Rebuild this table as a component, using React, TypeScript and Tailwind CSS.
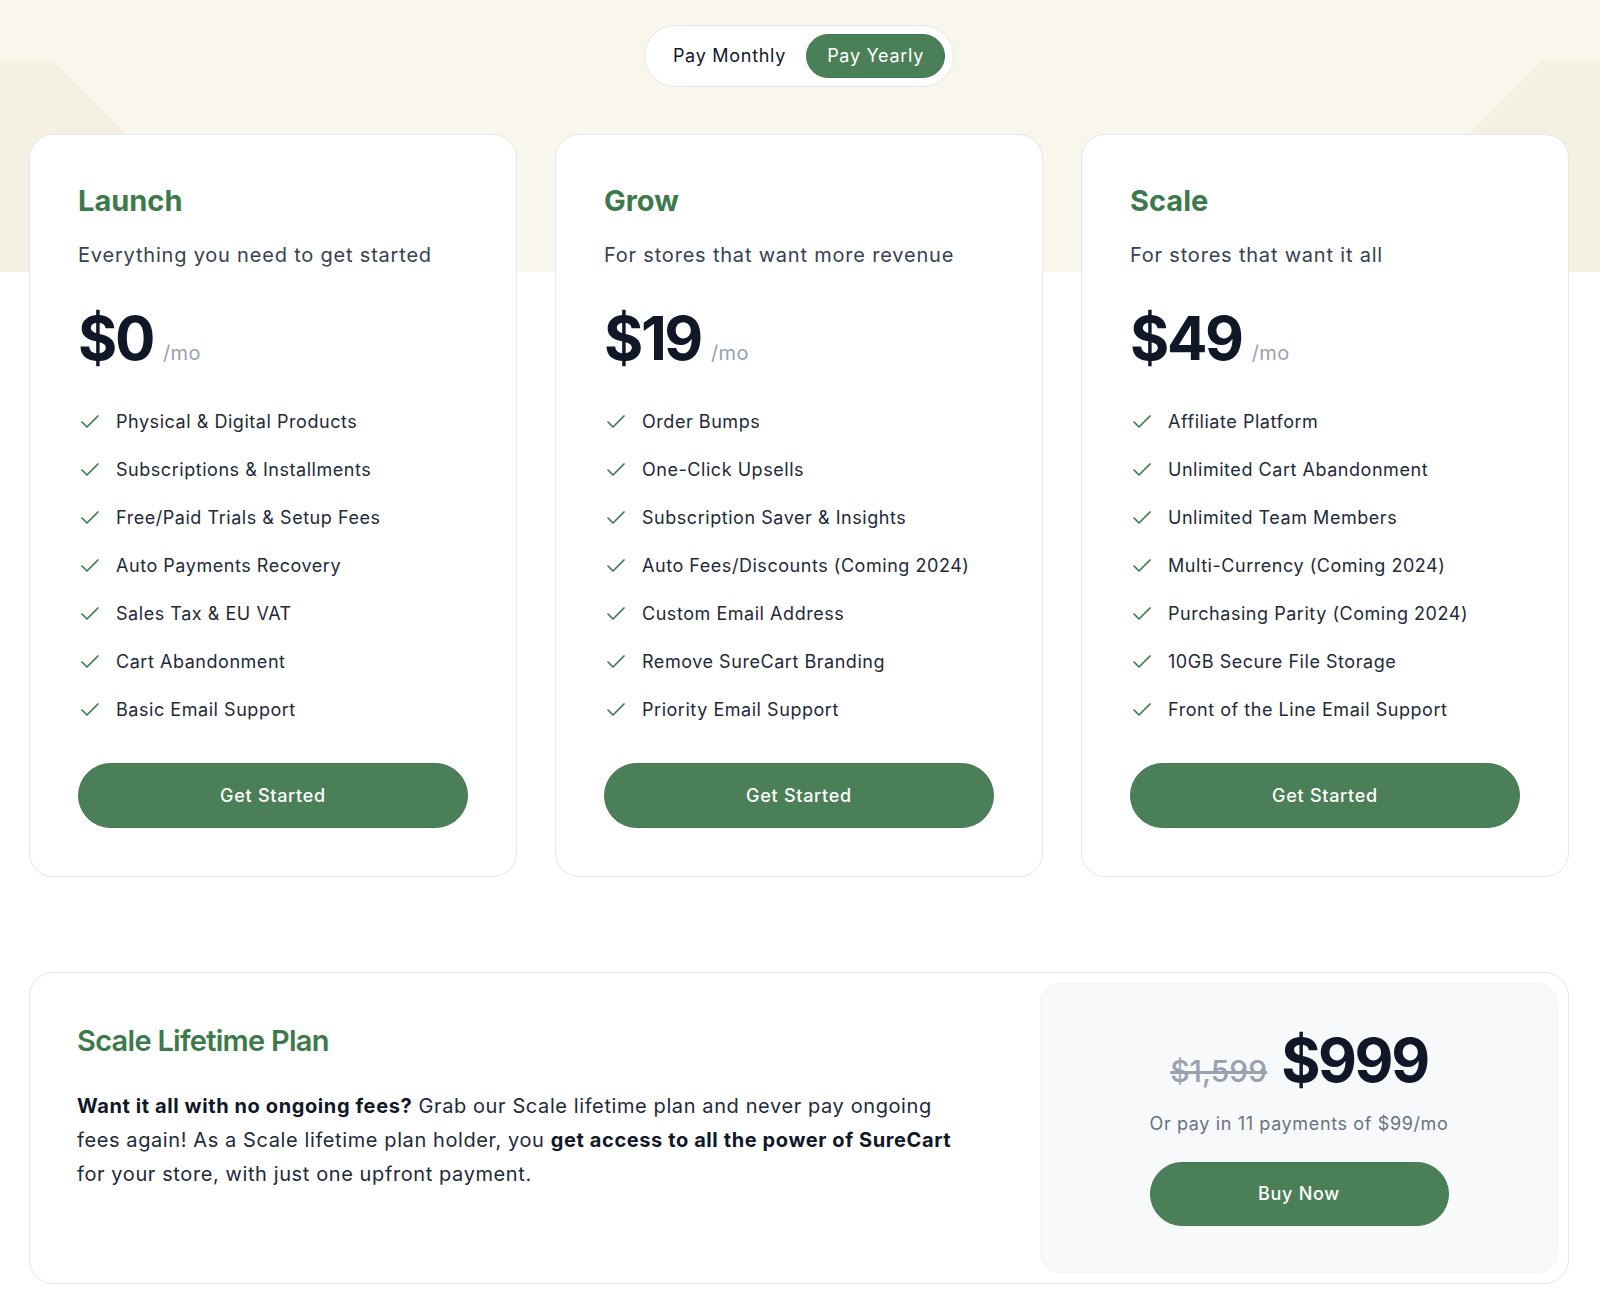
import { Check } from "lucide-react";

const plans = [
  {
    name: "Launch",
    tagline: "Everything you need to get started",
    price: "$0",
    features: [
      "Physical & Digital Products",
      "Subscriptions & Installments",
      "Free/Paid Trials & Setup Fees",
      "Auto Payments Recovery",
      "Sales Tax & EU VAT",
      "Cart Abandonment",
      "Basic Email Support",
    ],
  },
  {
    name: "Grow",
    tagline: "For stores that want more revenue",
    price: "$19",
    features: [
      "Order Bumps",
      "One-Click Upsells",
      "Subscription Saver & Insights",
      "Auto Fees/Discounts (Coming 2024)",
      "Custom Email Address",
      "Remove SureCart Branding",
      "Priority Email Support",
    ],
  },
  {
    name: "Scale",
    tagline: "For stores that want it all",
    price: "$49",
    features: [
      "Affiliate Platform",
      "Unlimited Cart Abandonment",
      "Unlimited Team Members",
      "Multi-Currency (Coming 2024)",
      "Purchasing Parity (Coming 2024)",
      "10GB Secure File Storage",
      "Front of the Line Email Support",
    ],
  },
];

export default function App() {
  return (
    <div className="relative w-full min-h-[1313px] bg-white font-['Inter',sans-serif] text-gray-900">
      {/* beige band behind the top of the cards */}
      <div className="absolute inset-x-0 top-0 h-[272px] bg-[#f9f7ec] overflow-hidden">
        <svg className="absolute inset-0 w-full h-full" viewBox="0 0 1600 272" preserveAspectRatio="none">
          <polygon points="0,61 53,61 264,272 0,272" fill="#f4f1e3" />
          <polygon points="1542,61 1600,61 1600,272 1331,272" fill="#f4f1e3" />
        </svg>
      </div>

      <div className="relative w-[1540px] ml-[29px] pt-[25px] pb-[29px]">
        {/* Billing toggle */}
        <div className="flex justify-center">
          <div className="flex items-center rounded-full border border-gray-200 bg-white p-2">
            <button className="h-[44px] px-5 rounded-full text-lg tracking-[0.04em] text-gray-900">Pay Monthly</button>
            <button className="h-[44px] px-5 rounded-full text-lg tracking-[0.04em] text-white bg-[#4b7f57] border border-[#3f7a4d]">
              Pay Yearly
            </button>
          </div>
        </div>

        {/* Plan cards */}
        <div className="mt-[47px] grid grid-cols-3 gap-[38px]">
          {plans.map((p) => (
            <div key={p.name} className="bg-white border border-gray-200 rounded-3xl p-12">
              <h3 className="text-[29px] leading-9 font-bold text-[#3d7a4b]">{p.name}</h3>
              <p className="mt-[22px] text-xl leading-7 tracking-[0.04em] text-gray-700">{p.tagline}</p>
              <div className="mt-[39px] flex items-baseline gap-[10px]">
                <span className="text-6xl leading-none font-bold text-gray-900 tracking-[-0.04em]">{p.price}</span>
                <span className="text-xl text-gray-400 tracking-[0.02em]">/mo</span>
              </div>
              <ul className="mt-10 space-y-5">
                {p.features.map((f) => (
                  <li key={f} className="flex items-center gap-[14px]">
                    <Check className="w-6 h-6 shrink-0 text-[#3f7d4c]" strokeWidth={1.75} />
                    <span className="text-lg leading-7 text-gray-800 tracking-[0.03em]">{f}</span>
                  </li>
                ))}
              </ul>
              <button className="mt-[39px] w-full h-[65px] rounded-full bg-[#4b7f57] border border-[#457a51] text-lg font-medium tracking-[0.04em] text-white">
                Get Started
              </button>
            </div>
          ))}
        </div>

        {/* Lifetime plan */}
        <div className="mt-[95px] flex bg-white border border-gray-200 rounded-3xl p-[10px]">
          <div className="flex-1 pl-[37px] pt-[42px]">
            <h3 className="text-[29px] leading-8 font-semibold tracking-tight text-[#3d7a4b]">Scale Lifetime Plan</h3>
            <p className="mt-8 w-[900px] text-xl leading-[34px] tracking-[0.03em] text-gray-800">
              <strong className="font-bold text-gray-900">Want it all with no ongoing fees?</strong> Grab our Scale
              lifetime plan and never pay ongoing fees again! As a Scale lifetime plan holder, you{" "}
              <strong className="font-bold text-gray-900">get access to all the power of SureCart</strong> for your
              store, with just one upfront payment.
            </p>
          </div>
          <div className="w-[518px] flex flex-col items-center bg-[#f8f9fb] border border-gray-100 rounded-[20px] py-[46px]">
            <div className="flex items-baseline gap-[14px]">
              <span className="text-3xl font-medium text-gray-400 line-through">$1,599</span>
              <span className="text-6xl leading-none font-bold text-gray-900 tracking-[-0.04em]">$999</span>
            </div>
            <p className="mt-5 text-lg leading-7 tracking-[0.035em] text-gray-500">Or pay in 11 payments of $99/mo</p>
            <button className="mt-6 w-[299px] h-16 rounded-full bg-[#4b7f57] border border-[#457a51] text-lg font-medium tracking-[0.04em] text-white">
              Buy Now
            </button>
          </div>
        </div>
      </div>
    </div>
  );
}
